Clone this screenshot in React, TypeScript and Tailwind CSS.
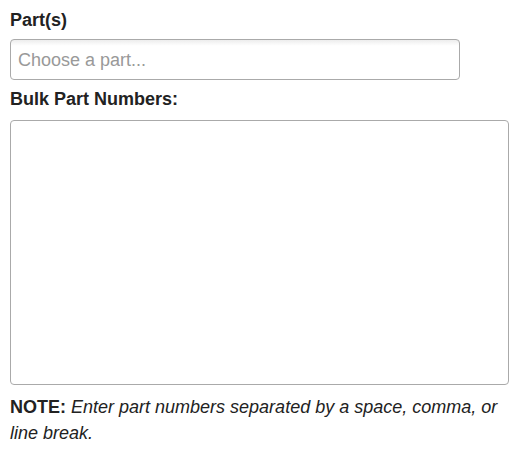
import React from "react";

export default function App() {
  return (
    <div className="w-[518px] h-[455px] bg-white pl-[10px] pt-[7px] font-['Liberation_Sans',Arial,sans-serif] text-[18px] leading-[26px] text-[#222]">
      <label className="block font-bold">Part(s)</label>
      <div className="mt-[6px] w-[450px] h-[41px] flex items-center px-[7px] border border-[#aaa] rounded-[4px] bg-white bg-[linear-gradient(#eee_1%,#fff_15%)]">
        <span className="text-[#999]">Choose a part...</span>
      </div>
      <label className="block font-bold mt-[6px]">Bulk Part Numbers:</label>
      <textarea className="block mt-[8px] w-[499px] h-[265px] border border-[#aaa] rounded-[4px] resize-none outline-none" />
      <p className="mt-[9px] w-[499px]">
        <span className="font-bold">NOTE:</span>{" "}
        <em className="italic">Enter part numbers separated by a space, comma, or line break.</em>
      </p>
    </div>
  );
}
